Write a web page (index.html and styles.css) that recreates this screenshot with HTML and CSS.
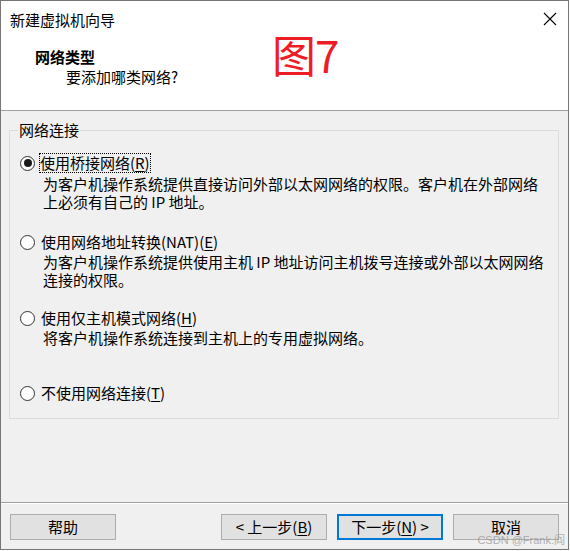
FILE: index.html
```html
<!DOCTYPE html>
<html lang="zh-CN">
<head>
<meta charset="utf-8">
<title>新建虚拟机向导</title>
<link rel="stylesheet" href="styles.css">
</head>
<body>
<div class="window">
  <div class="header">
    <div class="titlebar">
      <span class="title">新建虚拟机向导</span>
      <svg class="close" width="14" height="14" viewBox="0 0 14 14"><path d="M1 1 L13 13 M13 1 L1 13" stroke="#000" stroke-width="1.1" fill="none"/></svg>
    </div>
    <div class="head-title">网络类型</div>
    <div class="head-sub">要添加哪类网络?</div>
    <div class="annot">图7</div>
  </div>
  <div class="content">
    <fieldset class="group">
      <legend class="legend">网络连接</legend>
      <div class="option opt1">
        <div class="opt-row"><span class="radio checked"></span><span class="opt-label focus">使用桥接网络(<u>R</u>)</span></div>
        <div class="desc">为客户机操作系统提供直接访问外部以太网网络的权限。客户机在外部网络<br>上必须有自己的 IP 地址。</div>
      </div>
      <div class="option opt2">
        <div class="opt-row"><span class="radio"></span><span class="opt-label">使用网络地址转换(NAT)(<u>E</u>)</span></div>
        <div class="desc">为客户机操作系统提供使用主机 IP 地址访问主机拨号连接或外部以太网网络<br>连接的权限。</div>
      </div>
      <div class="option opt3">
        <div class="opt-row"><span class="radio"></span><span class="opt-label">使用仅主机模式网络(<u>H</u>)</span></div>
        <div class="desc">将客户机操作系统连接到主机上的专用虚拟网络。</div>
      </div>
      <div class="option opt4">
        <div class="opt-row"><span class="radio"></span><span class="opt-label">不使用网络连接(<u>T</u>)</span></div>
      </div>
    </fieldset>
  </div>
  <div class="footer">
    <button class="btn">帮助</button>
    <div class="spacer"></div>
    <button class="btn">&lt;&nbsp;上一步(<u>B</u>)</button>
    <button class="btn default">下一步(<u>N</u>)&nbsp;&gt;</button>
    <button class="btn">取消</button>
  </div>
  <div class="watermark">CSDN @Frank.阎</div>
</div>
</body>
</html>
```

FILE: styles.css
```css
* { box-sizing: border-box; }
html, body { margin: 0; padding: 0; background: #ffffff; }
body {
  font-family: "Noto Sans CJK SC", "Noto Sans", "Liberation Sans", sans-serif;
  font-size: 15px;
  color: #000;
}
.window {
  position: relative;
  width: 569px;
  height: 550px;
  border: 1px solid #767676;
  background: #f0f0f0;
  display: flex;
  flex-direction: column;
}
.header {
  position: relative;
  background: #fff;
  height: 110px;
  border-bottom: 1px solid #a0a0a0;
  flex: none;
}
.titlebar {
  height: 38px;
  display: flex;
  align-items: center;
  justify-content: space-between;
  padding: 0 11px 0 9px;
}
.title { line-height: 38px; }
.close { display: block; margin-top: -2px; }
.head-title {
  margin-top: 8px;
  padding-left: 34px;
  font-weight: bold;
  line-height: 20px;
}
.head-sub {
  padding-left: 65px;
  line-height: 20px;
}
.annot {
  position: absolute;
  left: 271px;
  top: 23px;
  font-size: 44px;
  line-height: 60px;
  color: #ee1d25;
  letter-spacing: -1px;
}
.content {
  flex: 1;
  padding: 9px 9px 0 8px;
}
.group {
  margin: 0;
  height: 299px;
  border: 1px solid #dcdcdc;
  padding: 0 0 0 10px;
}
.legend {
  margin-left: -2px;
  padding: 0 1px;
  line-height: 20px;
}
.opt-row {
  display: flex;
  align-items: center;
  height: 20px;
  line-height: 20px;
}
.radio {
  width: 15px;
  height: 15px;
  border: 1px solid #333;
  border-radius: 50%;
  background: #fff;
  margin-right: 6px;
  position: relative;
  flex: none;
}
.radio.checked::after {
  content: "";
  position: absolute;
  left: 2.5px;
  top: 2.5px;
  width: 8px;
  height: 8px;
  border-radius: 50%;
  background: #1a1a1a;
}
.opt-label { white-space: nowrap; }
.focus {
  outline: 1px dotted #000;
  outline-offset: -1px;
  padding: 0 1px;
  margin-left: -2px;
}
.desc {
  margin-left: 23px;
  line-height: 18px;
  white-space: nowrap;
}
.opt1 { margin-top: 13px; }
.opt1 .desc { margin-top: 2px; }
.opt2 { margin-top: 21px; }
.opt2 .desc, .opt3 .desc { margin-top: 1px; }
.opt3 { margin-top: 19px; }
.opt4 { margin-top: 36px; }
u { text-decoration: underline; text-underline-offset: 2px; }
.footer {
  flex: none;
  height: 47px;
  border-top: 1px solid #a0a0a0;
  box-shadow: inset 0 1px 0 #ffffff;
  display: flex;
  align-items: flex-start;
  gap: 10px;
  padding: 11px 9px 0 9px;
}
.spacer { flex: 1; }
.btn {
  width: 106px;
  height: 26px;
  border: 1px solid #adadad;
  background: #e1e1e1;
  font-family: inherit;
  font-size: 15px;
  color: #000;
  padding: 0;
  line-height: 22px;
}
.btn.default { border: 2px solid #0078d7; }
.watermark {
  position: absolute;
  right: 3px;
  bottom: 2px;
  font-size: 11px;
  line-height: 14px;
  color: rgba(150, 150, 150, 0.75);
  font-family: "Liberation Sans", "Noto Sans CJK SC", sans-serif;
}
```
